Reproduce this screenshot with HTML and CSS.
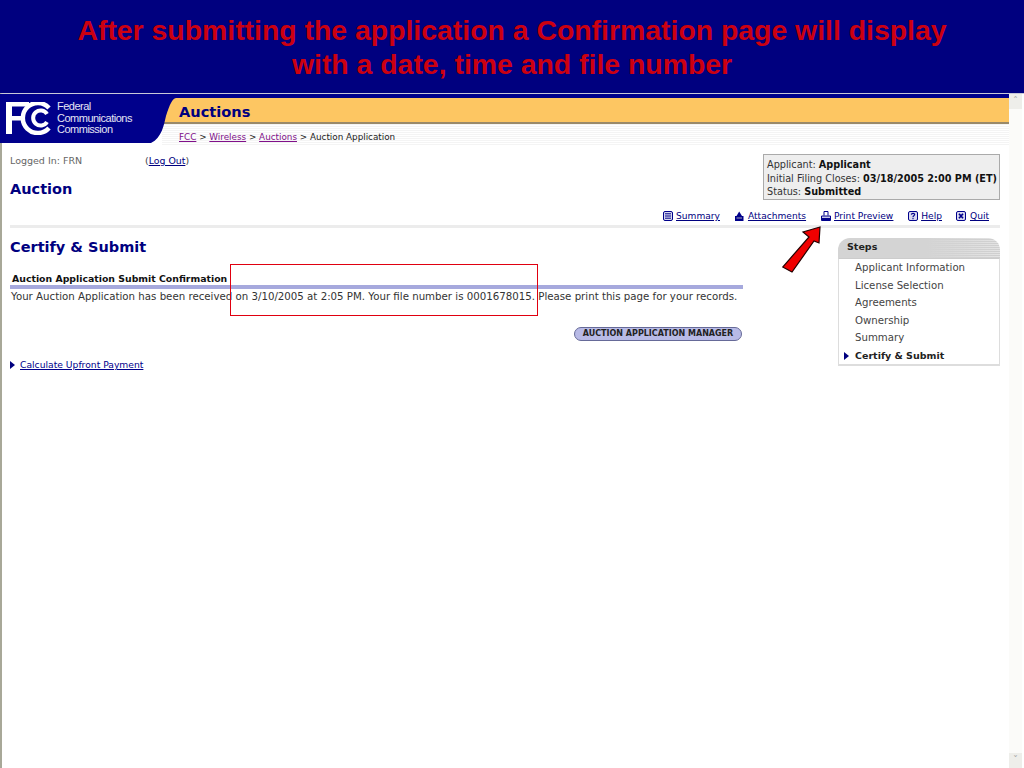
FILE: index.html
```html
<!DOCTYPE html>
<html lang="en">
<head>
<meta charset="utf-8">
<title>Auction Application Submit Confirmation</title>
<link rel="stylesheet" href="styles.css">
</head>
<body>
<header class="slide-title">After submitting the application a Confirmation page will display<br>with a date, time and file number</header>
<div class="window">
  <div class="page">
    <div class="mast">
      <div class="logo">
        <svg class="logo-bg" width="176" height="49" viewBox="0 0 176 49"><path d="M0 0H176V4C172 5 170 10 166 22C164 30 162 44 151 49H0Z" fill="#00008b"/></svg>
        <svg class="logo-mark" width="48" height="33" viewBox="0 0 48 33"><path d="M1 0H24V4.500H7V14H19V18.500H7V32H1Z" fill="#fff"/><path d="M44 6A15 15 0 1 0 44 26" fill="none" stroke="#fff" stroke-width="4.500"/><path d="M42 12A7.500 7.500 0 1 0 42 20" fill="none" stroke="#fff" stroke-width="4"/></svg>
        <div class="logo-text">Federal<br>Communications<br>Commission</div>
      </div>
      <div class="mast-right">
        <div class="band">Auctions</div>
        <div class="crumbs"><a href="#">FCC</a> &gt; <a href="#">Wireless</a> &gt; <a href="#">Auctions</a> &gt; Auction Application</div>
      </div>
    </div>
    <div class="top">
      <div class="top-left">
        <div class="login"><span class="login-label">Logged In: FRN</span><span>(<a class="link" href="#">Log Out</a>)</span></div>
        <h1 class="auction">Auction</h1>
      </div>
      <div class="status">
        <div>Applicant: <b>Applicant</b></div>
        <div>Initial Filing Closes: <b>03/18/2005 2:00 PM (ET)</b></div>
        <div>Status: <b>Submitted</b></div>
      </div>
    </div>
    <nav class="tools">
      <a class="tool" href="#"><svg width="10" height="10" viewBox="0 0 10 10"><rect x=".5" y=".5" width="9" height="9" rx="1.500" fill="#d8d8ee" stroke="#00008b"/><path d="M2 2.800H8M2 5H8M2 7.200H8" stroke="#00008b"/></svg><span>Summary</span></a>
      <a class="tool" href="#"><svg width="10" height="10" viewBox="0 0 10 10"><path d="M1 5H9.500V10H1Z" fill="#00008b"/><path d="M2.500 5L5.200 .5L8 5Z" fill="#00008b"/><path d="M2.500 7H8" stroke="#aab"/></svg><span>Attachments</span></a>
      <a class="tool" href="#"><svg width="10" height="10" viewBox="0 0 10 10"><path d="M3 4.500V.5H7V4.500" fill="#fff" stroke="#00008b"/><path d="M.5 5H9.500V9.500H.5Z" fill="#c8c8e8" stroke="#00008b"/><path d="M1 8H9" stroke="#00008b" stroke-width="2"/></svg><span>Print Preview</span></a>
      <a class="tool" href="#"><svg width="10" height="10" viewBox="0 0 10 10"><rect x=".5" y=".5" width="9" height="9" rx="1.500" fill="#d8d8ee" stroke="#00008b"/><path d="M3.300 3.600C3.500 1.900 6.700 1.900 6.700 3.600C6.700 4.800 5 4.700 5 6M5 6.800V8.200" fill="none" stroke="#00008b" stroke-width="1.100"/></svg><span>Help</span></a>
      <a class="tool" href="#"><svg width="10" height="10" viewBox="0 0 10 10"><rect x=".5" y=".5" width="9" height="9" rx="1.500" fill="#d8d8ee" stroke="#00008b"/><path d="M3 2.800L7 7.200M7 2.800L3 7.200" stroke="#00008b" stroke-width="1.700"/></svg><span>Quit</span></a>
    </nav>
    <div class="columns">
      <main class="main">
        <h2 class="certify">Certify &amp; Submit</h2>
        <h3 class="section">Auction Application Submit Confirmation</h3>
        <p class="message">Your Auction Application has been received on 3/10/2005 at 2:05 PM. Your file number is 0001678015. Please print this page for your records.</p>
        <div class="actions"><span class="pill">AUCTION APPLICATION MANAGER</span></div>
        <a class="calc" href="#"><i class="tri"></i><span class="link">Calculate Upfront Payment</span></a>
      </main>
      <aside class="steps">
        <div class="steps-head">Steps</div>
        <ul class="steps-list">
          <li>Applicant Information</li>
          <li>License Selection</li>
          <li>Agreements</li>
          <li>Ownership</li>
          <li>Summary</li>
          <li class="current"><i class="tri"></i>Certify &amp; Submit</li>
        </ul>
      </aside>
    </div>
  </div>
  <div class="scrollbar"><span class="sb-btn">&#710;</span><span class="sb-btn">&#711;</span></div>
</div>
<div class="callout-box"></div>
<svg class="callout-arrow" width="46" height="56" viewBox="0 0 46 56"><path d="M38 5L21 10L27 15L.7 45L10 50L32 19L37 21Z" fill="#f00000" stroke="#200" stroke-width="1.200"/></svg>
</body>
</html>
```
FILE: styles.css
```css
html, body { margin: 0; padding: 0; }
body { width: 1024px; height: 768px; overflow: hidden; background: #fff; font-family: "DejaVu Sans", sans-serif; font-size: 10px; color: #333; position: relative; }
a { color: inherit; }
.slide-title { height: 93px; box-sizing: border-box; padding-top: 13px; background: #00007f; color: #cc0010; font: bold 28.400px/34px "Liberation Sans", sans-serif; text-align: center; }
.window { display: flex; height: 675px; border-top: 1px solid #c8c8d8; border-left: 2px solid #a8a898; box-sizing: border-box; }
.page { width: 1007px; flex: none; }
.scrollbar { flex: 1; display: flex; flex-direction: column; justify-content: space-between; background: #fbfbf9; border-right: 2px solid #fff; color: #aaa; font-size: 10px; text-align: center; }
.sb-btn { height: 15px; background: #eeeeea; line-height: 16px; }
.mast { display: flex; position: relative; height: 52px; }
.logo { width: 160px; flex: none; position: relative; z-index: 1; color: #fff; display: flex; align-items: flex-start; gap: 4px; padding: 8px 0 0 3px; box-sizing: border-box; }
.logo-bg { position: absolute; left: -2px; top: 0; }
.logo-mark, .logo-text { position: relative; }
.logo-text { font: 11px/11.500px "Liberation Sans", sans-serif; letter-spacing: -.5px; color: #e4e4f4; margin-top: -1px; white-space: nowrap; }
.mast-right { flex: 1; border-top: 4px solid #00008b; }
.band { height: 24px; border-bottom: 2px solid #9a8a6a; background: #fdc662; color: #00007f; font-size: 14.600px; font-weight: bold; line-height: 27px; padding-left: 17px; }
.crumbs { height: 21px; padding-left: 17px; line-height: 27px; font-size: 8.800px; color: #222; background: repeating-linear-gradient(#f4f4f4 0 1px, #fff 1px 2px); }
.crumbs a { color: #80108a; }
.top { display: flex; justify-content: space-between; align-items: flex-start; padding: 8px 9px 0 8px; height: 60px; box-sizing: border-box; }
.login { display: flex; padding-top: 1px; font-size: 9.500px; color: #666; }
.login a { color: #00007f; }
.login-label { width: 135px; }
.login span:last-child { color: #444; font-size: 9.400px; }
.auction { margin: 14px 0 0; font-size: 14.500px; line-height: 18px; color: #00007f; }
.status { width: 237px; height: 46px; box-sizing: border-box; padding: 3px 3px; background: #eee; border: 1px solid #aaa; font-size: 9.700px; line-height: 13.500px; color: #333; white-space: nowrap; }
.status b { color: #111; }
.tools { display: flex; justify-content: flex-end; gap: 14.500px; margin-left: 8px; padding: 5px 11px 0 0; width: 990px; height: 22px; box-sizing: border-box; border-bottom: 3px solid #ececec; font-size: 9.100px; color: #00007f; }
.tool { display: flex; gap: 3.500px; align-items: flex-start; }
.tool span { text-decoration: underline; }
.columns { display: flex; justify-content: space-between; padding-left: 8px; width: 998px; box-sizing: border-box; }
.main { width: 733px; }
.certify { margin: 10px 0 0; font-size: 14.500px; line-height: 18px; color: #00007f; }
.section { margin: 17px 0 0 2px; font-size: 9.350px; line-height: 12px; color: #111; }
.message { margin: 0; border-top: 4px solid #a6a9dd; padding: 2px 0 0 1px; font-size: 10.230px; line-height: 12px; color: #333; white-space: nowrap; }
.actions { display: flex; justify-content: flex-end; margin: 24px 1px 0 0; }
.pill { display: block; width: 168px; height: 14px; box-sizing: border-box; border: 1px solid #666a98; border-radius: 7px; background: #b8bae6; font-size: 8px; font-weight: bold; line-height: 12px; text-align: center; color: #222; }
.calc { display: flex; align-items: center; gap: 5px; margin-top: 18px; font-size: 9.200px; color: #00007f; text-decoration: none; }
.link { text-decoration: underline; color: #00008b; }
.tri { display: inline-block; width: 0; height: 0; border-left: 5px solid #00007f; border-top: 4px solid transparent; border-bottom: 4px solid transparent; }
.steps { width: 162px; margin-top: 10px; }
.steps-head { height: 20px; border-radius: 12px 12px 0 0; background: linear-gradient(to right, #d4d4d4 55%, rgba(212,212,212,0) 100%), repeating-linear-gradient(#e4e4e4 0 1px, #cfcfcf 1px 2px); padding-left: 9px; font-size: 9.500px; font-weight: bold; line-height: 18px; color: #222; }
.steps-list { list-style: none; margin: 0; padding: 0; border: 1px solid #ddd; border-top-color: #ccc; border-bottom: 2px solid #ddd; font-size: 10.200px; color: #444; }
.steps-list li { height: 17.500px; line-height: 17.500px; padding-left: 16px; position: relative; }
.current { font-weight: bold; color: #222; font-size: 9.500px; }
.current .tri { position: absolute; left: 5px; top: 5px; }
.callout-box { position: absolute; left: 230px; top: 264px; width: 306px; height: 50px; border: 1px solid #e00010; }
.callout-arrow { position: absolute; left: 782px; top: 222px; }
```
